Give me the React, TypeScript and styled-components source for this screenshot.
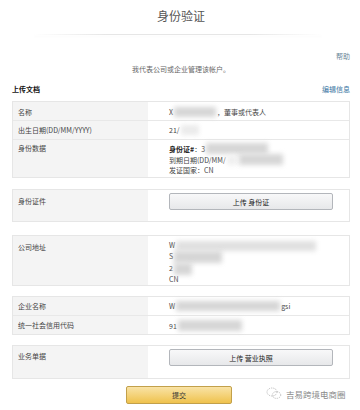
import React from "react";
import styled, { createGlobalStyle } from "styled-components";

const Global = createGlobalStyle`
  html, body { margin: 0; padding: 0; background: #fff; }
  body { font-family: "Noto Sans CJK SC", "Noto Sans", "Liberation Sans", sans-serif; color: #333; }
`;

const Page = styled.div`
  position: relative;
  width: 360px;
  height: 410px;
  box-sizing: border-box;
  padding: 0 10px 0 12px;
  overflow: hidden;
`;

const Title = styled.div`
  height: 30px;
  display: flex;
  align-items: center;
  justify-content: center;
  font-size: 12px;
  color: #555;
`;

const Divider = styled.div`
  margin: 4px 28px 0 22px;
  height: 1px;
  background: linear-gradient(to right, rgba(230,230,230,0), #e6e6e6 25%, #e6e6e6 75%, rgba(230,230,230,0));
  box-shadow: 0 2px 3px rgba(0,0,0,0.03);
`;

const HelpRow = styled.div`
  display: flex;
  justify-content: flex-end;
  margin-top: 17px;
  font-size: 7px;
  line-height: 9px;
  color: #6a8698;
`;

const Intro = styled.div`
  text-align: center;
  font-size: 7px;
  line-height: 9px;
  color: #666;
  margin-top: 4px;
`;

const SectionHead = styled.div`
  display: flex;
  justify-content: space-between;
  align-items: center;
  margin-top: 11px;
  font-size: 7px;
  line-height: 9px;
`;

const SectionTitle = styled.span`
  font-weight: 700;
  color: #111;
`;

const EditLink = styled.span`
  color: #3a76a3;
`;

const Table = styled.div<{ $mt: number }>`
  margin-top: ${(p) => p.$mt}px;
  border: 1px solid #e6e6e6;
  display: flex;
  flex-direction: column;
`;

const Row = styled.div<{ $h: number }>`
  display: grid;
  grid-template-columns: 135px 1fr;
  min-height: ${(p) => p.$h}px;
  & + & { border-top: 1px solid #e8e8e8; }
`;

const Label = styled.div<{ $pt: number }>`
  background: #f4f4f4;
  padding: ${(p) => p.$pt}px 0 0 5px;
  font-size: 7px;
  line-height: 10px;
  color: #444;
`;

const Value = styled.div<{ $pt: number; $lh?: number }>`
  padding: ${(p) => p.$pt}px 0 0 21px;
  font-size: 7px;
  line-height: ${(p) => p.$lh ?? 10}px;
  color: #444;
  display: flex;
  flex-direction: column;
`;

const Line = styled.div`
  display: flex;
  align-items: center;
  white-space: nowrap;
`;

const Strong = styled.span`
  font-weight: 700;
  color: #222;
`;

const Blur = styled.span<{ $w: number; $h?: number; $shade?: string }>`
  display: inline-block;
  width: ${(p) => p.$w}px;
  height: ${(p) => p.$h ?? 10}px;
  margin: 0 1px;
  background: ${(p) => p.$shade ?? "#d6d6d6"};
  filter: blur(2.5px);
`;

const ButtonCell = styled.div`
  padding: 3px 16px 0 21px;
`;

const UploadButton = styled.div`
  height: 15px;
  display: flex;
  align-items: center;
  justify-content: center;
  border: 1px solid #b3b6bb;
  border-radius: 2px;
  background: linear-gradient(to bottom, #f8f8f9, #e7e8ea);
  font-size: 7px;
  color: #222;
`;

const SubmitRow = styled.div`
  display: flex;
  justify-content: center;
  margin-top: 7px;
  padding-right: 4px;
`;

const SubmitButton = styled.div`
  width: 104px;
  height: 16px;
  display: flex;
  align-items: center;
  justify-content: center;
  border: 1px solid #c2a04a;
  border-radius: 2px;
  background: linear-gradient(to bottom, #f9e3a6, #efc24d);
  font-size: 7px;
  color: #333;
`;

const Watermark = styled.div`
  position: absolute;
  left: 266px;
  top: 387px;
  display: flex;
  align-items: center;
  gap: 4px;
  font-size: 8.5px;
  color: #8a8a8a;
  white-space: nowrap;
`;

const WxIcon = () => (
  <svg width="16" height="13" viewBox="0 0 16 13" fill="none" stroke="#b5b5b5" strokeWidth="0.9" strokeDasharray="1.2 1">
    <ellipse cx="6" cy="5" rx="5" ry="4" />
    <ellipse cx="10.5" cy="8" rx="4.2" ry="3.4" />
  </svg>
);

export default function App() {
  return (
    <>
      <Global />
      <Page>
        <Title>身份验证</Title>
        <Divider />
        <HelpRow>帮助</HelpRow>
        <Intro>我代表公司或企业管理该帐户。</Intro>
        <SectionHead>
          <SectionTitle>上传文档</SectionTitle>
          <EditLink>编辑信息</EditLink>
        </SectionHead>

        <Table $mt={7}>
          <Row $h={18}>
            <Label $pt={5}>名称</Label>
            <Value $pt={5}>
              <Line>X<Blur $w={42} />，董事或代表人</Line>
            </Value>
          </Row>
          <Row $h={18}>
            <Label $pt={4}>出生日期(DD/MM/YYYY)</Label>
            <Value $pt={4}>
              <Line>21/<Blur $w={18} $shade="#ebebeb" /></Line>
            </Value>
          </Row>
          <Row $h={37}>
            <Label $pt={3}>身份数据</Label>
            <Value $pt={3}>
              <Line><Strong>身份证#</Strong>：3<Blur $w={62} $h={11} /></Line>
              <Line>到期日期(DD/MM/<Blur $w={10} $shade="#efefef" /><Blur $w={44} $h={11} /></Line>
              <Line>发证国家：CN</Line>
            </Value>
          </Row>
        </Table>

        <Table $mt={11}>
          <Row $h={31}>
            <Label $pt={6}>身份证件</Label>
            <ButtonCell>
              <UploadButton>上传 身份证</UploadButton>
            </ButtonCell>
          </Row>
        </Table>

        <Table $mt={13}>
          <Row $h={49}>
            <Label $pt={6}>公司地址</Label>
            <Value $pt={5} $lh={9.7}>
              <Line>W<Blur $w={140} $shade="#e0e0e0" /></Line>
              <Line>S<Blur $w={48} $h={12} /></Line>
              <Line>2<Blur $w={18} $h={12} /></Line>
              <Line>CN</Line>
            </Value>
          </Row>
        </Table>

        <Table $mt={10}>
          <Row $h={18}>
            <Label $pt={4}>企业名称</Label>
            <Value $pt={4}>
              <Line>W<Blur $w={104} />gsi</Line>
            </Value>
          </Row>
          <Row $h={18}>
            <Label $pt={4}>统一社会信用代码</Label>
            <Value $pt={4}>
              <Line>91<Blur $w={64} $h={11} /></Line>
            </Value>
          </Row>
        </Table>

        <Table $mt={10}>
          <Row $h={32}>
            <Label $pt={5}>业务单据</Label>
            <ButtonCell>
              <UploadButton>上传 营业执照</UploadButton>
            </ButtonCell>
          </Row>
        </Table>

        <SubmitRow>
          <SubmitButton>提交</SubmitButton>
        </SubmitRow>

        <Watermark>
          <WxIcon />
          吉易跨境电商圈
        </Watermark>
      </Page>
    </>
  );
}
